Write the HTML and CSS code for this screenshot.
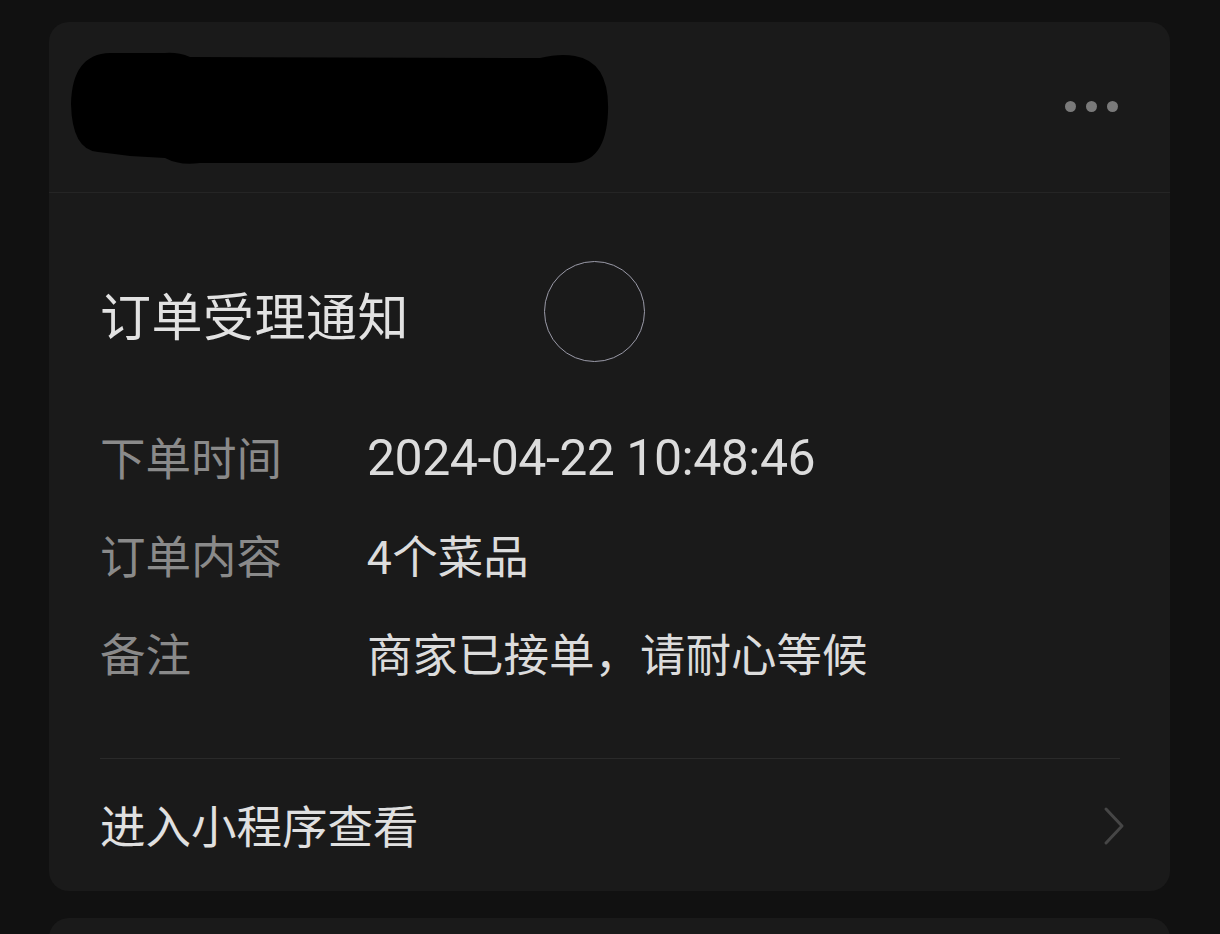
FILE: index.html
```html
<!DOCTYPE html>
<html lang="zh-CN">
<head>
<meta charset="utf-8">
<title>订单受理通知</title>
<link rel="stylesheet" href="styles.css">
</head>
<body>
<div class="card">
  <div class="header">
    <svg class="redact" width="545" height="115" viewBox="0 0 545 115">
      <path d="M40 1 L95 1 Q108 0 120 5 L470 6 Q490 1 505 4 Q540 10 538 60 Q536 112 500 111 L130 111 Q110 114 95 106 L60 104 Q45 102 28 100 Q2 98 1 52 Q2 2 40 1 Z" fill="#000"/>
    </svg>
    <div class="more"><span></span><span></span><span></span></div>
  </div>
  <div class="content">
    <div class="title">订单受理通知</div>
    <div class="rows">
      <div class="row"><div class="label">下单时间</div><div class="value num">2024-04-22 10:48:46</div></div>
      <div class="row"><div class="label">订单内容</div><div class="value">4个菜品</div></div>
      <div class="row"><div class="label">备注</div><div class="value">商家已接单，请耐心等候</div></div>
    </div>
    <div class="footer">
      <span class="link">进入小程序查看</span>
      <svg class="chev" width="24" height="40" viewBox="0 0 24 40"><path d="M4 3 L20 20 L4 37" fill="none" stroke="#464646" stroke-width="3" stroke-linecap="round" stroke-linejoin="round"/></svg>
    </div>
  </div>
  <div class="touch"></div>
</div>
<div class="card next"></div>
</body>
</html>
```

FILE: styles.css
```css
html, body {
  margin: 0;
  padding: 0;
  background: #111111;
  overflow: hidden;
  height: 934px;
}
body {
  font-family: "Noto Sans CJK SC", "Noto Sans", sans-serif;
  padding-top: 22px;
}
.card {
  position: relative;
  margin-left: 49px;
  width: 1121px;
  background: #1a1a1a;
  border-radius: 20px;
}
.card.next {
  margin-top: 27px;
  height: 200px;
}
.header {
  height: 170px;
  border-bottom: 1px solid #252525;
  display: flex;
  align-items: flex-start;
  justify-content: space-between;
  padding-left: 21px;
  padding-right: 52px;
}
.redact {
  margin-top: 30px;
  display: block;
}
.more {
  display: flex;
  gap: 10px;
  margin-top: 79px;
}
.more span {
  width: 11px;
  height: 11px;
  border-radius: 50%;
  background: #7a7a7a;
}
.content {
  padding: 0 50px 0 51px;
}
.title {
  padding-top: 91px;
  line-height: 60px;
  font-size: 51px;
  color: #e2e2e2;
  letter-spacing: 0.5px;
}
.rows {
  margin-top: 63px;
}
.row {
  display: flex;
  height: 98px;
  align-items: center;
  font-size: 45.5px;
}
.label {
  width: 267px;
  color: #8a8a8a;
}
.value {
  color: #dcdcdc;
}
.num {
  font-family: "Roboto", "Noto Sans CJK SC", sans-serif;
  font-size: 50px;
  letter-spacing: -0.5px;
  padding-top: 3px;
}
.footer {
  margin-top: 57px;
  border-top: 1px solid #2a2a2a;
  padding-top: 35px;
  padding-bottom: 37px;
  display: flex;
  align-items: center;
  justify-content: space-between;
  line-height: 60px;
}
.link {
  font-size: 45.5px;
  color: #e0e0e0;
}
.chev {
  display: block;
  margin-right: -6px;
  margin-top: 4px;
}
.touch {
  position: absolute;
  left: 495px;
  top: 239px;
  width: 99px;
  height: 99px;
  border-radius: 50%;
  border: 1.5px solid #9a9aa8;
}
```
